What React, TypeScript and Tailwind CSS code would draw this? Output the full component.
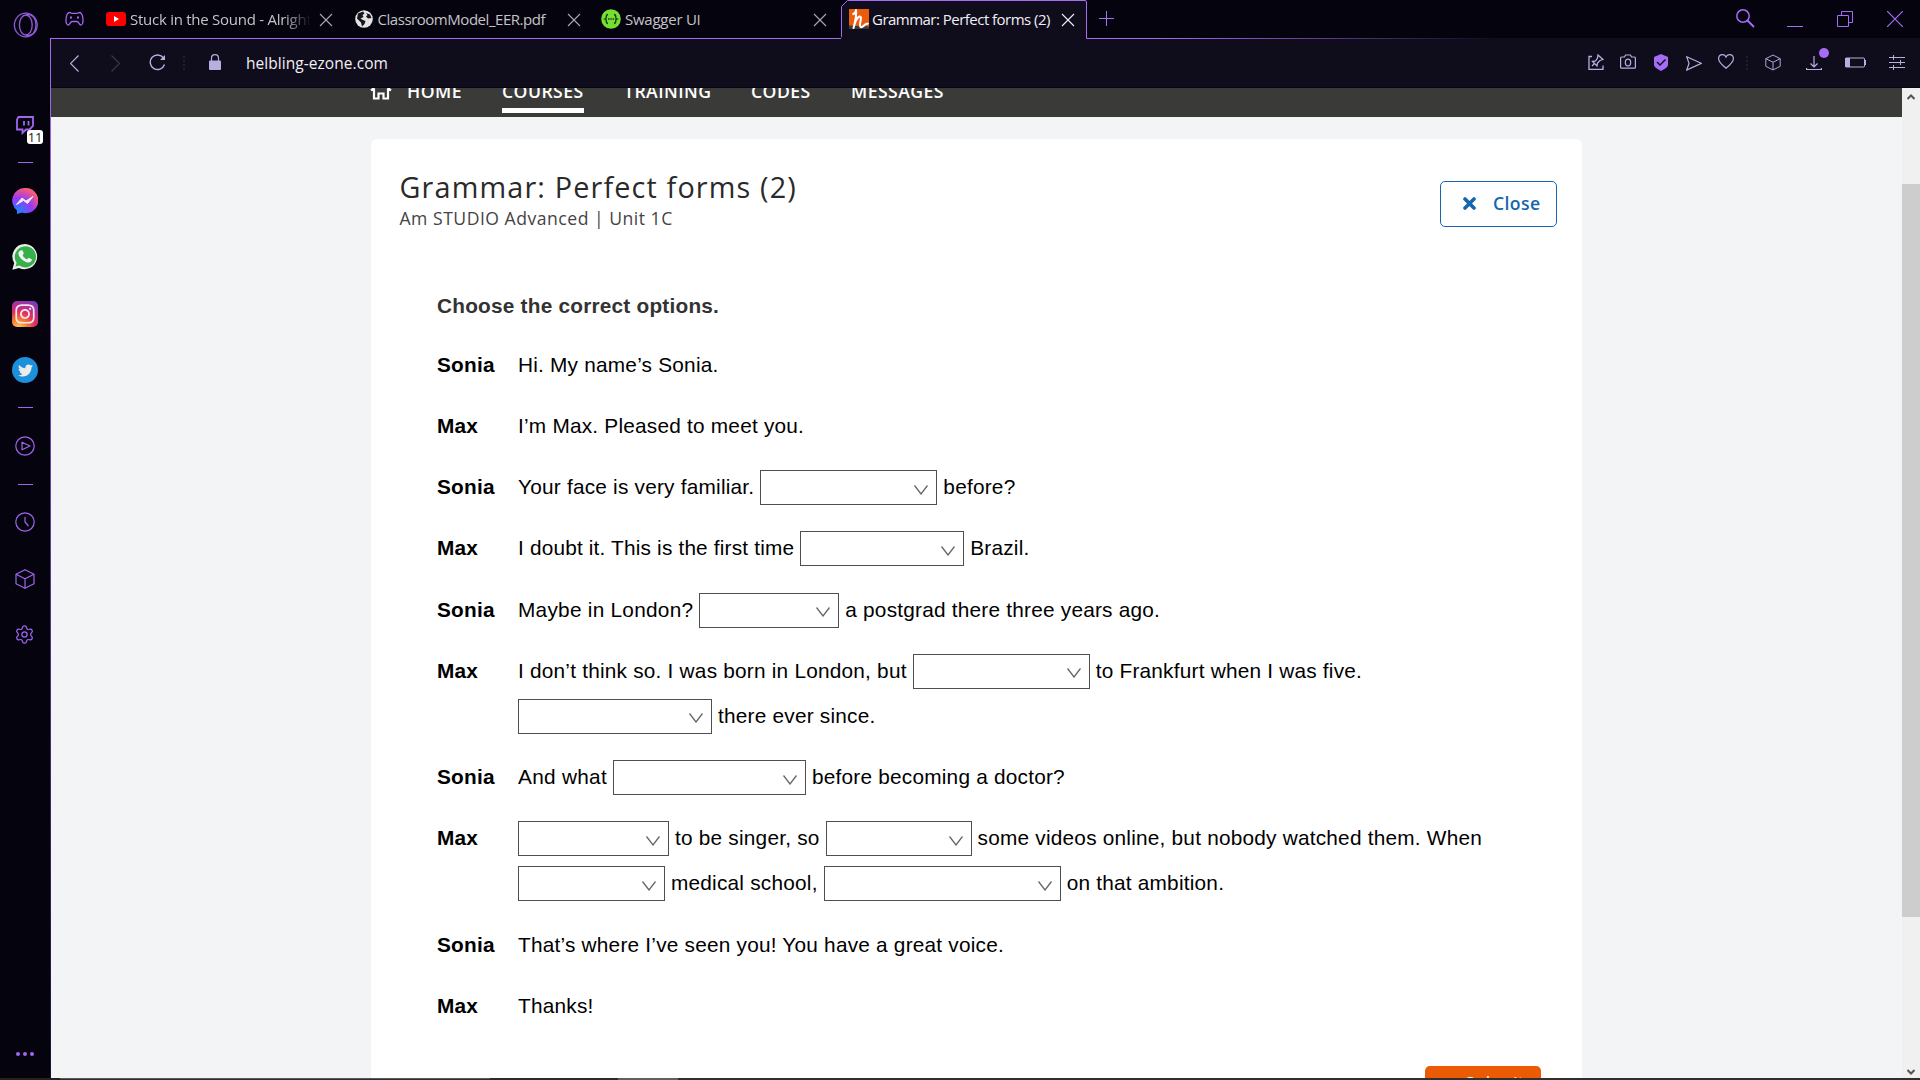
import React from "react";
import { Settings } from "lucide-react";
import { FaTwitter, FaInstagram } from "react-icons/fa";

const UI = "font-['Open_Sans','Noto_Sans',sans-serif]";

function CloseX({ className }: { className: string }) {
  return (
    <svg viewBox="0 0 14 14" className={`h-[14px] w-[14px] shrink-0 ${className}`} fill="none" stroke="currentColor" strokeWidth="1.1">
      <path d="M1 1l12 12M13 1L1 13" />
    </svg>
  );
}

function Cube({ className }: { className: string }) {
  return (
    <svg viewBox="0 0 20 20" className={`shrink-0 ${className}`} fill="none" stroke="currentColor" strokeWidth="1.2" strokeLinejoin="round">
      <path d="M10 .7l9 4.5v9.6l-9 4.5-9-4.5V5.200z" />
      <path d="M1 5.200l9 4.500 9-4.500M10 9.700v9.600" />
    </svg>
  );
}

function TabStrip() {
  return (
    <div className={`flex h-[39px] bg-[#05030d] text-[15px] text-[#c4c3c8] ${UI}`}>
      <div className="flex h-[39px] w-[790px] shrink-0 items-start border-b border-[#a66cf5]">
        <svg viewBox="0 0 19 16" className="ml-[14px] mt-[11px] h-[16px] w-[19px] shrink-0" fill="none" stroke="#a066f0" strokeWidth="1.3">
          <path d="M4.500 1.500c1.500 0 1.500.8 2.500.8h5c1 0 1-.8 2.500-.8 2.500 0 3.200 3.500 3.500 7 .2 3-.6 5.500-2.200 5.500-1.600 0-2-3.500-4-3.500H7.200c-2 0-2.400 3.500-4 3.500S.8 11.500 1 8.500c.3-3.500 1-7 3.500-7z" />
          <path d="M5 6.500h2M12 6.500h2" strokeWidth="2" />
        </svg>
        <svg viewBox="0 0 20 14" className="ml-[22px] mt-[12px] h-[14px] w-[20px] shrink-0">
          <rect width="20" height="14" rx="3" fill="#f00" />
          <path d="M8 4l5 3-5 3z" fill="#fff" />
        </svg>
        <div className="ml-[4px] mt-[8px] w-[183px] overflow-hidden whitespace-nowrap leading-[22px] tracking-[-0.26px] [mask-image:linear-gradient(90deg,#000_84%,transparent_99%)]">
          Stuck in the Sound - Alright
        </div>
        <CloseX className="ml-[6px] mt-[13px] text-[#aaa8b0]" />
        <svg viewBox="0 0 18 18" className="ml-[22px] mt-[10px] h-[18px] w-[18px] shrink-0">
          <circle cx="9" cy="9" r="8.800" fill="#e4e4e6" />
          <path d="M3 3.500L8 1.500l1.500 2-2 1.500 1 2-3 1.500L8 10l2.500 1-1 3-2.500 2.500-1-4L2 8.500zM11 3l4 1.500L16.500 8 13 8.500 11 6.500l1.500-1.500z" fill="#17151e" />
        </svg>
        <div className="ml-[4.500px] mt-[8px] w-[187.500px] whitespace-nowrap leading-[22px] tracking-[-0.460px]">ClassroomModel_EER.pdf</div>
        <CloseX className="ml-[2px] mt-[13px] text-[#aaa8b0]" />
        <svg viewBox="0 0 20 20" className="ml-[20px] mt-[9px] h-[20px] w-[20px] shrink-0">
          <circle cx="10" cy="10" r="9.800" fill="#76e030" />
          <path d="M7 5.500c-3 0-.8 4-2.600 4.500C6.200 10.500 4 14.500 7 14.500M13 5.500c3 0 .8 4 2.600 4.500-1.800.5.400 4.500-2.600 4.500" fill="none" stroke="#183a1a" strokeWidth="1.400" />
          <path d="M7 10h1.500M9.300 10h1.500M11.600 10h1.500" stroke="#183a1a" strokeWidth="1.500" />
        </svg>
        <div className="ml-[4px] mt-[8px] w-[188px] whitespace-nowrap leading-[22px] tracking-[-0.250px]">Swagger UI</div>
        <CloseX className="mt-[13px] text-[#aaa8b0]" />
      </div>
      <div className="relative flex h-[39px] w-[247px] shrink-0 items-start text-[#f1f0f4]">
        <svg viewBox="0 0 247 39" className="absolute inset-0 h-[39px] w-[247px]" fill="#0f0c1b" stroke="#a66cf5">
          <path d="M-1 38.500l1.500-2V6.500l6-6H244q1.500 0 1.500 1.500v35l1.500 2V40H-1z" stroke="none" />
          <path d="M-1 38.500l1.500-2V6.500l6-6H244q1.500 0 1.500 1.500v36.500H248" fill="none" />
        </svg>
        <svg viewBox="0 0 20 20" className="relative ml-[8px] mt-[9px] h-[20px] w-[20px] shrink-0">
          <rect width="20" height="20" fill="#ea5b0c" />
          <path d="M0 16.500L20 17.500V20H0z" fill="#3a3b39" />
          <path d="M3.500 5.500C6 4.500 7 2.500 7 1c.5 5-.5 11-2.500 18C6 13 8 8.500 10.500 7.500c3-.5.500 4.500.5 8.500 0 3 2 2.500 4 .5s4-1.500 4.500-2.500" fill="none" stroke="#fff" strokeWidth="2" strokeLinejoin="round" />
        </svg>
        <div className="relative ml-[3px] mt-[8px] w-[189px] whitespace-nowrap leading-[22px] tracking-[-0.520px]">Grammar: Perfect forms (2)</div>
        <CloseX className="relative mt-[13px] text-[#f1f0f4]" />
      </div>
      <div className="flex flex-1 flex-col">
        <div className="flex h-[38px] items-start text-[#a66cf5]">
          <svg viewBox="0 0 15 15" className="ml-[11px] mt-[11px] h-[15px] w-[15px]" stroke="currentColor"><path d="M0 7.500h15M7.500 0v15" /></svg>
          <svg viewBox="0 0 19 19" className="ml-[622px] mt-[9px] h-[19px] w-[19px]" fill="none" stroke="currentColor" strokeWidth="1.500"><circle cx="7" cy="7" r="6.200" /><path d="M11.500 11.500l6.500 6.500" strokeWidth="2" /></svg>
          <svg viewBox="0 0 16 16" className="ml-[32px] mt-[11px] h-[16px] w-[16px]" stroke="currentColor"><path d="M0 15.500h16" /></svg>
          <svg viewBox="0 0 16 16" className="ml-[34px] mt-[11px] h-[16px] w-[16px]" fill="none" stroke="currentColor"><path d="M.5 4.500h11v11H.5zM4.500 4.500v-4h11v11h-4" /></svg>
          <svg viewBox="0 0 16 16" className="ml-[34px] mt-[11px] h-[16px] w-[16px]" stroke="currentColor" strokeWidth="1.200"><path d="M0 0l16 16M16 0L0 16" /></svg>
        </div>
        <div className="h-px bg-[linear-gradient(90deg,#a66cf5_0%,#a66cf5_8%,#0f0c1b_49%)]" />
      </div>
    </div>
  );
}

function AddressBar() {
  return (
    <div className="flex h-[49px] items-start border-b border-[#08060f] bg-[#0f0c1b] text-[#b8aee0]">
      <svg viewBox="0 0 9 17" className="ml-[19px] mt-[16px] h-[17px] w-[9px]" fill="none" stroke="currentColor" strokeWidth="1.200"><path d="M8.500.5l-8 8 8 8" /></svg>
      <svg viewBox="0 0 9 17" className="ml-[32px] mt-[16px] h-[17px] w-[9px] text-[#3a364c]" fill="none" stroke="currentColor" strokeWidth="1.200"><path d="M.5.5l8 8-8 8" /></svg>
      <svg viewBox="0 0 17 17" className="ml-[29px] mt-[15px] h-[17px] w-[17px]" fill="none" stroke="currentColor" strokeWidth="1.400"><path d="M14.500 4A7.300 7.300 0 1 0 15.500 10.500" /><path d="M16 1v5h-5z" fill="currentColor" stroke="none" /></svg>
      <div className="ml-[17px] mt-[17px] h-[14px] border-l-2 border-dotted border-[#211b40]" />
      <svg viewBox="0 0 12 16" className="ml-[24px] mt-[15px] h-[16px] w-[12px]"><rect y="6.500" width="12" height="9.500" rx="1" fill="#b8aee0" /><path d="M2.500 7V4.200a3.500 3.500 0 0 1 7 0V7" fill="none" stroke="#b8aee0" strokeWidth="1.200" /></svg>
      <div className={`ml-[25px] mt-[13px] w-[400px] whitespace-nowrap text-[15.500px] leading-[22px] tracking-[0.050px] text-[#f1f0f4] ${UI}`}>helbling-ezone.com</div>
      <div className="ml-auto flex items-start">
        <svg viewBox="0 0 16 16" className="mr-[16px] mt-[15px] h-[16px] w-[16px]" fill="none" stroke="currentColor" strokeWidth="1.300"><path d="M4 2.500H1v13h14v-4M10 1l5 4.500-3 1-2.500 2.500-.500 3L4.500 7.500l3-.5L9.500 4zM6.500 9.500L4 12" /></svg>
        <svg viewBox="0 0 16 16" className="mr-[18px] mt-[15px] h-[16px] w-[16px]" fill="none" stroke="currentColor" strokeWidth="1.200"><path d="M1.500 3h3l1-2h5l1 2h3q.9 0 .9 1v9.200q0 .9-.9.9h-13q-.9 0-.9-.9V4q0-1 .9-1z" /><ellipse cx="8" cy="8.500" rx="2.700" ry="3.300" /></svg>
        <svg viewBox="0 0 14 17" className="mr-[18px] mt-[15px] h-[17px] w-[14px]"><path d="M7 0l7 3v8q0 2.500-7 6-7-3.500-7-6V3z" fill="#a66cf5" /><path d="M3 8l3 3 5.500-5.500" fill="none" stroke="#0f0c1b" strokeWidth="1.500" /></svg>
        <svg viewBox="0 0 16 15" className="mr-[16px] mt-[17px] h-[15px] w-[16px]" fill="none" stroke="currentColor" strokeWidth="1.200"><path d="M.7.8L15.300 7.300.7 14.100 3 7.400z" /></svg>
        <svg viewBox="0 0 16 15" className="mr-[12px] mt-[15px] h-[15px] w-[16px]" fill="none" stroke="currentColor" strokeWidth="1.200"><path d="M8 14.300C4 11 .6 8 .6 4.800.6-.2 6.500-.6 8 3 9.500-.6 15.400-.2 15.400 4.800 15.400 8 12 11 8 14.300z" /></svg>
        <div className="mr-[16.500px] mt-[17px] h-[14px] border-l-2 border-dotted border-[#211b40]" />
        <Cube className="mr-[25.500px] mt-[15px] h-[17px] w-[16px]" />
        <div className="relative mr-[23px]">
          <svg viewBox="0 0 16 15" className="mt-[17px] h-[15px] w-[16px]" fill="none" stroke="currentColor" strokeWidth="1.200"><path d="M8 0v11M4.500 7.500L8 11l3.500-3.500M.6 12v1.500h14.800V12" /></svg>
          <div className="absolute left-[13px] top-[9px] h-[10px] w-[10px] rounded-full bg-[#a66cf5]" />
        </div>
        <svg viewBox="0 0 21 11" className="mr-[23px] mt-[18px] h-[11px] w-[21px]" fill="none" stroke="currentColor"><rect x=".5" y="1" width="19" height="9" rx="1" /><path d="M0 1h5v9H0zM19.500 3H21v5h-1.500z" fill="currentColor" stroke="none" /></svg>
        <svg viewBox="0 0 16 15" className="mr-[15px] mt-[16px] h-[15px] w-[16px]" stroke="currentColor"><path d="M0 2.500h16M0 7.500h16M0 12.500h16M4.500 0v5M11.500 5v5M4.500 10v5" /></svg>
      </div>
    </div>
  );
}

function Dash({ className }: { className: string }) {
  return <div className={`h-px w-[15px] shrink-0 bg-[#a066f0] ${className}`} />;
}

function Sidebar() {
  return (
    <div className="flex w-[50px] shrink-0 flex-col items-center bg-[#05030d] text-[#a066f0]">
      <svg viewBox="0 0 26 26" className="ml-[1px] mt-[12px] h-[26px] w-[26px] shrink-0" fill="none" stroke="#8f5bd8" strokeWidth="1.300">
        <ellipse cx="12.800" cy="13" rx="11.400" ry="11.900" /><ellipse cx="12.800" cy="13" rx="6.400" ry="10" /><path d="M12.800 2.200c8.500 0 10.200 6.500 10.200 10.800s-1.700 10.800-10.200 10.800" />
      </svg>
      <div className="relative mt-[78px]">
        <svg viewBox="0 0 18 19" className="h-[19px] w-[18px]" fill="none" stroke="currentColor" strokeWidth="1.800"><path d="M1 3.500L2.500 1H17v9l-3.500 3.500H10L6.500 17v-3.500H1z" /><path d="M8 5v4.500M12.500 5v4.500" /></svg>
        <div className={`absolute left-[11px] top-[14px] h-[14px] w-[16px] rounded-[3px] bg-white text-center text-[13px] leading-[14px] tracking-[-0.300px] text-[#222] ${UI}`}>11</div>
      </div>
      <Dash className="mt-[27px]" />
      <svg viewBox="0 0 26 26" className="mt-[25px] h-[26px] w-[26px] shrink-0">
        <defs><radialGradient id="msg" cx=".2" cy="1" r="1.100"><stop offset="0" stopColor="#0a90ff" /><stop offset=".55" stopColor="#9a38f5" /><stop offset=".95" stopColor="#ff5c70" /></radialGradient></defs>
        <path d="M13 0a12.600 12.600 0 1 1-3 24.600L5 26v-3.500A12.600 12.600 0 0 1 13 0z" fill="url(#msg)" />
        <path d="M4.500 16.500l5.500-6.500 4 3 7-4.500-5.500 7-4-3z" fill="#eee" stroke="#eee" strokeLinejoin="round" />
      </svg>
      <svg viewBox="0 0 26 26" className="mt-[30px] h-[26px] w-[26px] shrink-0">
        <path d="M13.200 0A12.600 12.600 0 1 1 7 23.900L.3 25.800 2.200 19A12.600 12.600 0 0 1 13.200 0z" fill="#ececec" />
        <path d="M13.200 2.200a10.600 10.600 0 1 1-5.700 19.400L3.500 22.600l1.100-3.900A10.600 10.600 0 0 1 13.200 2.200z" fill="#36b04a" />
        <path d="M8.500 6.500l2-.2 1.300 3.200-1.200 1.700c1 2 2.500 3.400 4.500 4.200l1.500-1.700 3.200 1.500c.2 2.500-2 3.500-4 3.200-5-1-9-5-9.400-9 0-1.200.8-2.200 2.100-2.900z" fill="#f4f4f4" />
      </svg>
      <div className="mt-[31px] flex h-[26px] w-[26px] shrink-0 items-center justify-center rounded-[5px] bg-[radial-gradient(circle_at_25%_105%,#ffd060_0%,#f9802e_25%,#e0305c_50%,#b02fa0_72%,#5a45c0_100%)]">
        <FaInstagram className="h-[22px] w-[22px] text-[#f0eaf0]" />
      </div>
      <div className="mt-[30px] flex h-[26px] w-[26px] shrink-0 items-center justify-center rounded-full bg-[#1d90dc]">
        <FaTwitter className="h-[15px] w-[15px] text-[#ececec]" />
      </div>
      <Dash className="mt-[24px]" />
      <svg viewBox="0 0 20 20" className="mr-px mt-[28px] h-[20px] w-[20px] shrink-0" fill="none" stroke="currentColor" strokeWidth="1.200"><circle cx="10" cy="10" r="9.200" /><path d="M7 6.200v7.600l8-3.800z" strokeLinejoin="round" /></svg>
      <Dash className="mt-[28px]" />
      <svg viewBox="0 0 20 20" className="mr-px mt-[27px] h-[20px] w-[20px] shrink-0" fill="none" stroke="currentColor" strokeWidth="1.200"><circle cx="10" cy="10" r="9.200" /><path d="M10 5v5l3.500 4" /></svg>
      <Cube className="mr-px mt-[37px] h-[20px] w-[20px]" />
      <Settings className="mr-px mt-[35px] h-[21px] w-[21px] shrink-0" strokeWidth={1.4} />
      <div className="mb-[22px] mr-px mt-auto flex gap-[3px]">
        <i className="h-[4px] w-[4px] rounded-full bg-current" /><i className="h-[4px] w-[4px] rounded-full bg-current" /><i className="h-[4px] w-[4px] rounded-full bg-current" />
      </div>
    </div>
  );
}

function SiteNav() {
  return (
    <div className="flex h-[29px] w-full items-start overflow-hidden bg-[#3a3b39] font-['Open_Sans',sans-serif] text-[17.600px] font-semibold leading-[24px] tracking-[0.450px] text-white">
      <svg viewBox="0 0 22 20" className="-mt-[8px] ml-[319px] h-[20px] w-[22px] shrink-0" fill="none" stroke="#fff" strokeWidth="2.200"><path d="M1 10.500L11 1.500l10 9M4 9v9.500h4.500v-5h5v5H18V9" /></svg>
      <div className="-mt-[9px] ml-[15px] w-[95px]">HOME</div>
      <div className="-mt-[9px] h-[34px] w-[82px] border-b-[5px] border-white">COURSES</div>
      <div className="-mt-[9px] ml-[40px] w-[127px]">TRAINING</div>
      <div className="-mt-[9px] w-[100px]">CODES</div>
      <div className="-mt-[9px]">MESSAGES</div>
    </div>
  );
}

function Gap({ className }: { className: string }) {
  return (
    <span className={`mt-[2px] inline-flex h-[35px] shrink-0 items-center justify-end border border-[#4f4f4f] bg-white pr-[8px] pt-[4px] ${className}`}>
      <svg viewBox="0 0 14 10" className="h-[10px] w-[14px]" fill="none" stroke="#666" strokeWidth="1.300"><path d="M.5.500l6.500 8.500 6.500-8.500" /></svg>
    </span>
  );
}

function Line({ children }: { children: React.ReactNode }) {
  return <div className="flex h-[45px] items-center gap-[6px] whitespace-nowrap leading-[45px]">{children}</div>;
}

function Turn({ who, children }: { who: string; children: React.ReactNode }) {
  return (
    <div className="flex">
      <div className="w-[81px] shrink-0 font-bold leading-[45px]">{who}</div>
      <div>{children}</div>
    </div>
  );
}

function Exercise() {
  return (
    <div className="ml-[66px] font-['Liberation_Sans',Arial,sans-serif] text-[20.800px] tracking-[0.220px] text-black">
      <div className="h-[44px] font-bold leading-[44px] text-[#333]">Choose the correct options.</div>
      <div className="mt-[13.600px] flex flex-col gap-[16.250px]">
        <Turn who="Sonia"><Line>Hi. My name’s Sonia.</Line></Turn>
        <Turn who="Max"><Line>I’m Max. Pleased to meet you.</Line></Turn>
        <Turn who="Sonia"><Line>Your face is very familiar.<Gap className="w-[177px]" />before?</Line></Turn>
        <Turn who="Max"><Line><span className="tracking-[0.180px]">I doubt it. This is the first time</span><Gap className="w-[164px]" />Brazil.</Line></Turn>
        <Turn who="Sonia"><Line><span className="tracking-[0.260px]">Maybe in London?</span><Gap className="w-[140px]" />a postgrad there three years ago.</Line></Turn>
        <Turn who="Max">
          <Line>I don’t think so. I was born in London, but<Gap className="w-[177px]" />to Frankfurt when I was five.</Line>
          <Line><Gap className="w-[194px]" />there ever since.</Line>
        </Turn>
        <Turn who="Sonia"><Line><span className="tracking-[0.280px]">And what</span><Gap className="w-[193px]" />before becoming a doctor?</Line></Turn>
        <Turn who="Max">
          <Line><Gap className="w-[151px]" />to be singer, so<Gap className="w-[146px]" />some videos online, but nobody watched them. When</Line>
          <Line><Gap className="w-[147px]" />medical school,<Gap className="w-[237px]" />on that ambition.</Line>
        </Turn>
        <Turn who="Sonia"><Line>That’s where I’ve seen you! You have a great voice.</Line></Turn>
        <Turn who="Max"><Line>Thanks!</Line></Turn>
      </div>
    </div>
  );
}

function Page() {
  return (
    <div className="flex min-h-0 flex-1 bg-[#f3f4f6]">
      <div className="flex min-w-0 flex-1 flex-col overflow-hidden">
        <SiteNav />
        <div className="ml-[320px] mt-[22px] flex h-[939px] w-[1211px] shrink-0 flex-col rounded-t-[6px] bg-white">
          <div className="flex h-[145px] shrink-0 justify-between font-['Open_Sans',sans-serif]">
            <div className="ml-[28.500px] mt-[27px]">
              <div className="text-[28.800px] leading-[42px] tracking-[1.150px] text-[#2a2a2a]">Grammar: Perfect forms (2)</div>
              <div className="-mt-[2px] text-[17.600px] leading-[24px] tracking-[0.500px] text-[#444]">Am STUDIO Advanced | Unit 1C</div>
            </div>
            <div className="mr-[25px] mt-[42px] flex h-[46px] w-[117px] items-center rounded-[5px] border border-[#1566ae] pb-[2px] pl-[22px] text-[17.600px] font-semibold tracking-[0.400px] text-[#1566ae]">
              <svg viewBox="0 0 13 13" className="mr-[17px] h-[13px] w-[13px]" stroke="currentColor" strokeWidth="3.600" strokeLinecap="round"><path d="M2 2l9 9M11 2l-9 9" /></svg>
              Close
            </div>
          </div>
          <Exercise />
          <div className="ml-[1054px] mt-auto flex h-[12px] w-[116px] items-start justify-center gap-2 overflow-hidden rounded-t-[5px] bg-[#ea5b03] font-['Open_Sans',sans-serif] text-[18px] font-medium leading-[34px] text-white">
            <span>✓</span><span>Submit</span>
          </div>
        </div>
      </div>
      <div className="flex w-[18px] shrink-0 flex-col items-center bg-[#f0f0f0]">
        <svg viewBox="0 0 8 6" className="mt-[6px] h-[6px] w-[8px]" fill="none" stroke="#555" strokeWidth="2"><path d="M.5 5L4 1.500 7.500 5" /></svg>
        <div className="mt-[84px] h-[733px] w-full bg-[#cdcdcd]" />
        <svg viewBox="0 0 8 6" className="mb-[3px] mt-auto h-[6px] w-[8px]" fill="none" stroke="#555" strokeWidth="2"><path d="M.5 1L4 4.500 7.500 1" /></svg>
      </div>
    </div>
  );
}

export default function App() {
  return (
    <div className="flex h-[1080px] w-[1920px] flex-col overflow-hidden">
      <div className="flex h-[1078px] shrink-0">
        <Sidebar />
        <div className="flex w-px shrink-0 flex-col">
          <div className="h-[38px] bg-[#05030d]" />
          <div className="flex-1 bg-[linear-gradient(#a66cf5,#6f46a8_400px,#1b1230)]" />
        </div>
        <div className="flex w-[1869px] flex-col">
          <TabStrip />
          <AddressBar />
          <Page />
        </div>
      </div>
      <div className="flex h-[2px]">
        <div className="w-[60px] bg-[#222]" />
        <div className="w-[430px] border-t border-[#5a5a5a] bg-[#2f2f2f]" />
        <div className="w-[128px] bg-[#2b2b2b]" />
        <div className="w-[60px] bg-[#606060]" />
        <div className="flex-1 bg-[#2f2f2f]" />
      </div>
    </div>
  );
}
